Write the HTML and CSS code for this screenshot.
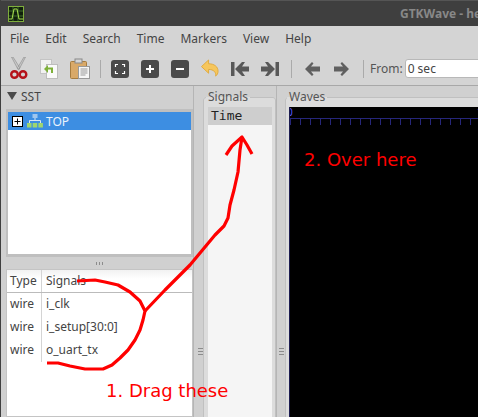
FILE: index.html
```html
<!DOCTYPE html>
<html lang="en">
<head>
    <meta charset="UTF-8">
    <title>GTKWave</title>
    <link rel="stylesheet" href="styles.css">
</head>
<body>
    <header class="titlebar">
        <svg class="app-icon" width="16" height="16" viewBox="0 0 16 16">
            <rect x="0.5" y="0.5" width="15" height="15" fill="#10200c" stroke="#7fae3c"/>
            <path d="M1 5h14M1 10h14M5 1v14M10 1v14" stroke="#3f6a2a" stroke-width="1"/>
            <path d="M1 13h3l2-10h3l2 10h4" fill="none" stroke="#a4dc4c" stroke-width="1"/>
        </svg>
        <span class="title">GTKWave - he</span>
    </header>

    <nav class="menubar">
        <span>File</span>
        <span>Edit</span>
        <span>Search</span>
        <span>Time</span>
        <span>Markers</span>
        <span>View</span>
        <span>Help</span>
    </nav>

    <div class="toolbar">
        <svg class="tool" width="18" height="23" viewBox="0 0 18 23">
            <path d="M1.500 0L8 12.500 10 11 3 0zM15.500 0L9 12.500 7.500 11 14 0z" fill="#c8c8c8" stroke="#8a8a8a" stroke-width="0.600"/>
            <circle cx="4.500" cy="17.500" r="3.300" fill="none" stroke="#b5121a" stroke-width="2.400"/>
            <circle cx="13" cy="17.500" r="3.300" fill="none" stroke="#b5121a" stroke-width="2.400"/>
        </svg>
        <svg class="tool" width="18" height="20" viewBox="0 0 18 20">
            <rect x="0.500" y="0.500" width="11" height="14" fill="#f2f2f2" stroke="#c4c4c4"/>
            <rect x="6.500" y="5.500" width="11" height="14" fill="#fafafa" stroke="#bdbdbd"/>
            <path d="M4 10l4-4v2.500h5V14h-2v-3.500H8V14z" fill="#7fb13a"/>
        </svg>
        <svg class="tool clip" width="20" height="21" viewBox="0 0 20 21">
            <rect x="0.500" y="3.500" width="16" height="17" rx="1" fill="#d9a968" stroke="#a67c3f"/>
            <rect x="5" y="1" width="7" height="4" fill="#d5d5d5" stroke="#888"/>
            <rect x="8.500" y="8.500" width="11" height="12" fill="#f6f6f6" stroke="#999"/>
            <path d="M10.500 11h7M10.500 13h7M10.500 15h7M10.500 17h5" stroke="#999"/>
        </svg>
        <span class="sep sep-first"></span>
        <svg class="tool" width="18" height="18" viewBox="0 0 18 18">
            <rect width="18" height="18" rx="3" fill="#4a4a4a"/>
            <path d="M4.500 7V4.500H7M11 4.500h2.500V7M13.500 11v2.500H11M7 13.500H4.500V11" fill="none" stroke="#fff" stroke-width="1.200"/>
        </svg>
        <svg class="tool" width="18" height="18" viewBox="0 0 18 18">
            <rect width="18" height="18" rx="3" fill="#4a4a4a"/>
            <path d="M5 9h8M9 5v8" stroke="#fff" stroke-width="2"/>
        </svg>
        <svg class="tool" width="18" height="18" viewBox="0 0 18 18">
            <rect width="18" height="18" rx="3" fill="#4a4a4a"/>
            <path d="M5 9h8" stroke="#fff" stroke-width="2"/>
        </svg>
        <svg class="tool" width="18" height="19" viewBox="0 0 19 19">
            <path d="M0.500 7.500L8 0.500v4c6 0 10 3 10 8 0 2-1 4-2.500 5 .5-4-2-7-7.500-7v4z" fill="#f6c65c" stroke="#e0a93c"/>
        </svg>
        <svg class="tool" width="18" height="14" viewBox="0 0 18 14">
            <path d="M0 0h3.500v14H0zM11 0l3 0-3 4.500h7v5h-7l3 4.500h-3l-7-7z" fill="#585858"/>
        </svg>
        <svg class="tool" width="18" height="14" viewBox="0 0 18 14">
            <path d="M18 0h-3.500v14H18zM7 0L4 0l3 4.500H0v5h7L4 14h3l7-7z" fill="#585858"/>
        </svg>
        <span class="sep"></span>
        <svg class="tool arrow-tool" width="15" height="14" viewBox="0 0 15 14">
            <path d="M7 0L0 7l7 7 1.500-1.500L6 9.500h9v-5H6l2.500-3z" fill="#606060"/>
        </svg>
        <svg class="tool arrow-tool" width="15" height="14" viewBox="0 0 15 14">
            <path d="M8 0l7 7-7 7-1.500-1.500L9 9.500H0v-5h9l-2.500-3z" fill="#606060"/>
        </svg>
        <span class="sep sep-last"></span>
        <label class="from">From:</label>
        <div class="from-input">0 sec</div>
    </div>

    <main class="panes">
        <section class="left-pane">
            <div class="sst-head"><span class="arrow"></span>SST</div>
            <div class="tree">
                <div class="tree-row">
                    <svg class="expander" width="11" height="11" viewBox="0 0 11 11">
                        <rect x="0.500" y="0.500" width="10" height="10" fill="#fff" stroke="#000"/>
                        <path d="M2.500 5.500h6M5.500 2.500v6" stroke="#000"/>
                    </svg>
                    <svg class="tree-icon" width="16" height="14" viewBox="0 0 16 14">
                        <rect x="5.500" y="0" width="5" height="4" fill="#9fc6ee"/>
                        <path d="M8 4v3M2.500 9V6.500h11V9" fill="none" stroke="#d8e6f4"/>
                        <rect x="0" y="9" width="4.500" height="4.500" fill="#9fd66e"/>
                        <rect x="5.700" y="9" width="4.500" height="4.500" fill="#9fd66e"/>
                        <rect x="11.400" y="9" width="4.500" height="4.500" fill="#9fd66e"/>
                    </svg>
                    <span>TOP</span>
                </div>
            </div>
            <div class="handle"><span class="grip-h"></span></div>
            <div class="signal-list">
                <div class="list-head">
                    <div class="col-type">Type</div>
                    <div class="col-name">Signals</div>
                </div>
                <div class="list-row"><div class="col-type">wire</div><div class="col-name">i_clk</div></div>
                <div class="list-row"><div class="col-type">wire</div><div class="col-name">i_setup[30:0]</div></div>
                <div class="list-row"><div class="col-type">wire</div><div class="col-name">o_uart_tx</div></div>
            </div>
        </section>

        <div class="gutter"><span class="grip"></span></div>

        <fieldset class="frame frame-signals">
            <legend>Signals</legend>
            <div class="signals-body">
                <div class="time-row">Time</div>
            </div>
        </fieldset>

        <div class="gutter gutter-narrow"><span class="grip"></span></div>

        <fieldset class="frame frame-waves">
            <legend>Waves</legend>
            <div class="waves-body">
                <span class="ruler-num ruler-zero">0</span>
                <span class="ruler-num ruler-one">1</span>
                <div class="ruler"></div>
            </div>
        </fieldset>
    </main>

    <!-- red notes drawn over the window -->
    <svg class="scribble" width="478" height="417" viewBox="0 0 478 417">
        <path d="M77 281L95 280 105 282 118 285 130 292 140 301 145 311 143 320 140 330 135 340 128 350 120 358 112 365 103 369 85 369 70 366 58 363 47 363" />
        <path d="M145 311L165 290 190 265 205 247 215 235 224 226 228 218 230 205 234 190 238 172 240 150 242 137" />
        <path d="M226 155L232 146 242 137 247 145 252 154" />
    </svg>
    <div class="note note-drag">1. Drag these</div>
    <div class="note note-over">2. Over here</div>
</body>
</html>
```

FILE: styles.css
```css
* {
    box-sizing: border-box;
}

html, body {
    margin: 0;
    padding: 0;
}

body {
    width: 478px;
    height: 417px;
    overflow: hidden;
    position: relative;
    font-family: "Noto Sans", sans-serif;
    font-size: 12px;
    color: #444;
    background-color: #d0d0d0;
    border-left: 1px solid #3f3f3f;
}

.titlebar {
    height: 26px;
    margin-left: -1px;
    background-color: #3f3f3f;
    border-top: 1px solid #555;
    display: flex;
    align-items: center;
    padding-left: 8px;
    position: relative;
}

.title {
    position: absolute;
    left: 400px;
    top: 4px;
    width: 78px;
    overflow: hidden;
    white-space: nowrap;
    font-weight: bold;
    font-size: 12px;
    color: #888;
}

.menubar {
    height: 24px;
    display: flex;
    align-items: center;
    gap: 16px;
    padding-left: 9px;
    background-color: #d4d4d4;
}

.toolbar {
    height: 36px;
    display: flex;
    align-items: center;
    padding: 2px 0 0 9px;
    gap: 12px;
    background-color: #d4d4d4;
    border-bottom: 1px solid #a8a8a8;
}

.tool {
    flex: none;
}

.clip {
    margin-right: -2px;
}

.arrow-tool {
    margin-left: 2px;
}

.sep {
    width: 1px;
    height: 18px;
    background-color: #aaa;
    flex: none;
    margin-right: -1px;
}

.sep-first {
    margin-right: -2px;
}

.sep-last {
    margin-left: 2px;
}

.from {
    margin-left: -5px;
    color: #555;
}

.from-input {
    flex: none;
    width: 100px;
    height: 19px;
    margin-left: -10px;
    padding-left: 2px;
    background-color: #fff;
    border: 1px solid #b8b8b8;
    border-radius: 3px;
    line-height: 17px;
}

.panes {
    height: 331px;
    display: flex;
}

.left-pane {
    width: 192px;
    flex: none;
    display: flex;
    flex-direction: column;
    padding-left: 5px;
}

.sst-head {
    height: 23px;
    display: flex;
    align-items: center;
    gap: 4px;
    padding: 0 0 3px 1px;
}

.arrow {
    width: 0;
    height: 0;
    border-left: 5px solid transparent;
    border-right: 5px solid transparent;
    border-top: 8px solid #4a4a4a;
}

.tree {
    height: 148px;
    background-color: #fff;
    border: 3px solid #bfbfbf;
    border-left-width: 2px;
    border-right-width: 2px;
}

.tree-row {
    height: 18px;
    display: flex;
    align-items: center;
    padding-left: 4px;
    background-color: #3d8ee2;
    color: #eaf3fc;
}

.expander {
    margin-right: 4px;
}

.tree-icon {
    margin-right: 3px;
}

.handle {
    height: 12px;
    display: flex;
    align-items: center;
    justify-content: center;
}

.grip-h {
    width: 7px;
    height: 3px;
    background-image: repeating-linear-gradient(to right, #8c8c8c 0, #8c8c8c 1px, transparent 1px, transparent 3px);
}

.signal-list {
    flex: 1;
    background-color: #fff;
    border: 1px solid #c4c4c4;
}

.list-head {
    height: 23px;
    display: flex;
    border-bottom: 1px solid #bbb;
    background-image: linear-gradient(#f2f2f2, #fff 40%);
}

.list-row {
    height: 23px;
    display: flex;
}

.col-type {
    width: 35px;
    padding-left: 3px;
    line-height: 21px;
    border-right: 1px solid #d4d4d4;
}

.col-name {
    padding-left: 4px;
    line-height: 21px;
}

.gutter {
    width: 10px;
    flex: none;
    display: flex;
    justify-content: center;
    padding: 262px 0 0 3px;
    border-left: 1px solid #b5b5b5;
}

.gutter-narrow {
    width: 9px;
    padding-left: 0;
}

.grip {
    width: 5px;
    height: 8px;
    background-image: repeating-linear-gradient(#8c8c8c 0, #8c8c8c 1px, transparent 1px, transparent 3px);
}

.frame {
    margin: 2px 0 0;
    min-width: 0;
    height: 340px;
    flex: none;
    border: 1px solid #c0c0c0;
    border-radius: 3px;
    background-color: #dcdcdc;
    color: #555;
}

.frame legend {
    padding: 0 2px;
    margin-left: -2px;
    height: 18px;
    line-height: 17px;
}

.frame-signals {
    width: 73px;
    padding: 1px 3px 0 4px;
}

.frame-waves {
    width: 203px;
    padding: 1px 0 0 3px;
}

.signals-body {
    height: 320px;
    background-color: #f5f5f5;
}

.time-row {
    height: 18px;
    padding-left: 3px;
    background-color: #cecece;
    font-family: "DejaVu Sans Mono", monospace;
    font-size: 13px;
    line-height: 18px;
    color: #222;
}

.waves-body {
    height: 320px;
    background-color: #000;
    border-left: 1px solid #1c1c50;
    position: relative;
    overflow: hidden;
}

.ruler-num {
    position: absolute;
    top: 0;
    font-size: 10px;
    line-height: 10px;
    color: #5a5aff;
}

.ruler-zero {
    left: -3px;
}

.ruler-one {
    left: 187px;
}

.ruler {
    position: absolute;
    left: 0;
    right: 0;
    top: 11px;
    height: 7px;
    border-top: 1px solid #26267a;
    background-image: repeating-linear-gradient(to right, #26267a 0, #26267a 1px, transparent 1px, transparent 10px);
}

.scribble {
    position: absolute;
    left: -1px;
    top: 0;
}

.scribble path {
    fill: none;
    stroke: #f00;
    stroke-width: 3.200;
    stroke-linejoin: round;
}

.note {
    position: absolute;
    font-family: "DejaVu Sans", sans-serif;
    font-size: 18px;
    line-height: 20px;
    color: #f00;
    white-space: nowrap;
}

.note-drag {
    left: 105px;
    top: 381px;
}

.note-over {
    left: 303px;
    top: 150px;
}
```
